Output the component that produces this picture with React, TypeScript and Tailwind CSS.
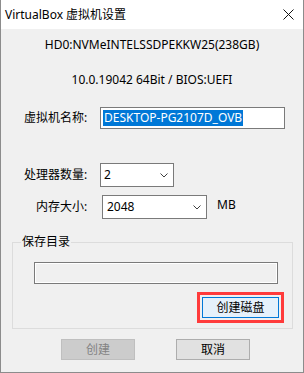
import React from 'react';

const font = { fontFamily: '"Noto Sans", "Noto Sans CJK SC", sans-serif' };

const Chevron: React.FC = () => (
  <svg width="8" height="5" viewBox="0 0 8 5" className="shrink-0">
    <path d="M0.5 0.5 L4 4 L7.5 0.5" fill="none" stroke="#404040" strokeWidth="1" />
  </svg>
);

const App: React.FC = () => {
  return (
    <div
      className="w-[304px] h-[373px] flex flex-col border-x border-b border-[#8c8c8c] bg-[#f0f0f0] text-[12px] text-black"
      style={font}
    >
      {/* TITLE BAR */}
      <div className="h-[29px] bg-white flex items-center justify-between pl-[4px] pr-[9px] shrink-0">
        <span className="leading-[16px]">VirtualBox 虚拟机设置</span>
        <svg width="11" height="11" viewBox="0 0 11 11">
          <path d="M0.5 0.5 L10.5 10.5 M10.5 0.5 L0.5 10.5" stroke="#111" strokeWidth="1" />
        </svg>
      </div>

      {/* INFO LINES */}
      <div className="mt-[8px] h-[16px] leading-[16px] text-center">HD0:NVMeINTELSSDPEKKW25(238GB)</div>
      <div className="mt-[19px] h-[16px] leading-[16px] text-center">10.0.19042 64Bit / BIOS:UEFI</div>

      {/* VM NAME */}
      <div className="mt-[19px] h-[22px] flex items-center">
        <span className="w-[99px] pl-[23px] leading-[16px]">虚拟机名称:</span>
        <div className="w-[185px] h-[22px] border border-[#7a7a7a] bg-white flex items-center pl-[2px]">
          <span className="bg-[#0078d7] text-white leading-[16px] px-[1px]">DESKTOP-PG2107D_OVB</span>
        </div>
      </div>

      {/* CPU */}
      <div className="mt-[34px] h-[24px] flex items-center">
        <span className="w-[99px] pl-[23px] leading-[16px]">处理器数量:</span>
        <div className="w-[74px] h-[24px] border border-[#7a7a7a] bg-white flex items-center justify-between pl-[3px] pr-[5px]">
          <span className="leading-[16px]">2</span>
          <Chevron />
        </div>
      </div>

      {/* MEMORY */}
      <div className="mt-[8px] h-[24px] flex items-center">
        <span className="w-[101px] pl-[35px] leading-[16px]">内存大小:</span>
        <div className="w-[105px] h-[24px] border border-[#7a7a7a] bg-white flex items-center justify-between pl-[4px] pr-[5px]">
          <span className="leading-[16px]">2048</span>
          <Chevron />
        </div>
        <span className="ml-[10px] leading-[16px] -mt-[4px]">MB</span>
      </div>

      {/* SAVE DIR GROUP */}
      <div className="relative mt-[23px] ml-[11px] w-[281px] h-[87px] border border-[#dcdcdc] flex flex-col">
        <span className="absolute -top-[9px] left-[8px] px-[1px] bg-[#f0f0f0] leading-[16px]">保存目录</span>
        <div className="mt-[19px] ml-[21px] w-[244px] h-[22px] border border-[#7a7a7a] bg-[#f0f0f0] shadow-[inset_0_0_0_1px_#ffffff]" />
        <div className="mt-[8px] ml-[184px] w-[87px] h-[31px] border-[3px] border-[#ff3b3b] p-[2px]">
          <div className="w-full h-full border border-[#0078d7] bg-[#e5f1fb] flex items-center justify-center leading-[16px]">
            创建磁盘
          </div>
        </div>
      </div>

      {/* BOTTOM BUTTONS */}
      <div className="mt-[10px] flex">
        <div className="ml-[60px] w-[74px] h-[21px] border border-[#bfbfbf] bg-[#cccccc] text-[#838383] flex items-center justify-center leading-[16px]">
          创建
        </div>
        <div className="ml-[41px] w-[74px] h-[21px] border border-[#adadad] bg-[#e1e1e1] flex items-center justify-center leading-[16px]">
          取消
        </div>
      </div>
    </div>
  );
};

export default App;
